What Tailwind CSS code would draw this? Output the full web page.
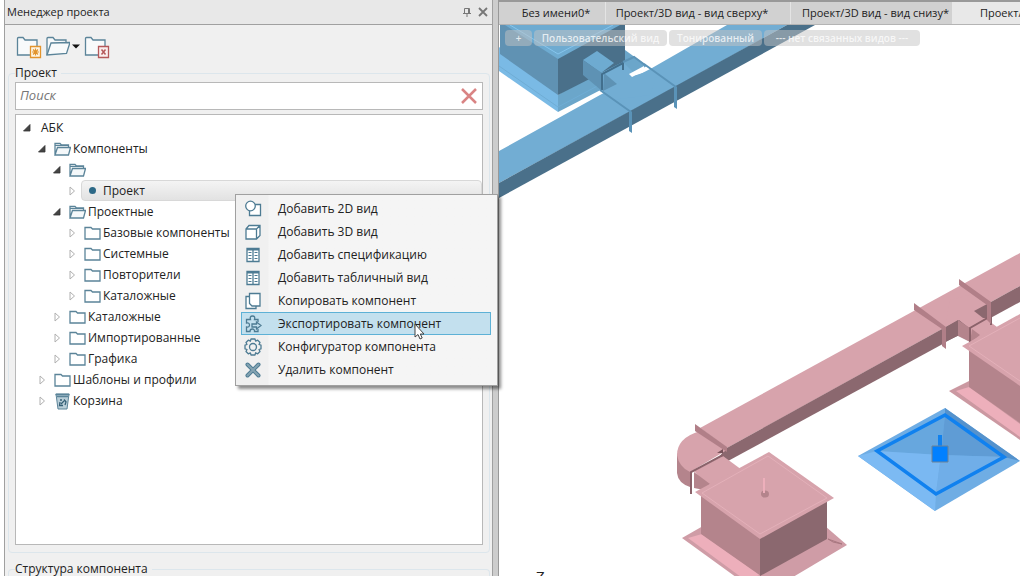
<!DOCTYPE html>
<html lang="ru">

<head>
  <meta charset="utf-8">
  <title>Менеджер проекта</title>
  <script src="https://cdn.jsdelivr.net/npm/@tailwindcss/browser@4"></script>
</head>

<body class="h-screen overflow-hidden bg-white px-1 font-['Open_Sans','Noto_Sans',sans-serif] text-xs text-[#222]">
  <!-- Icon sprite -->
  <svg class="hidden">
    <symbol id="folder" viewBox="0 0 17 14">
      <path d="M1 1.500h6l1.500 1.500H16v10H1z" fill="#fff" stroke="#5b8499" stroke-width="1.300" />
    </symbol>
    <symbol id="folder-open" viewBox="0 0 17 14">
      <path d="M1 13V1.500h5L7.500 3H14.500V5.500M1 13L3.500 5.500H16.500L14.500 13z" fill="#f4f8fa" stroke="#5b8499" stroke-width="1.300" />
      <path d="M1 3.500h13" stroke="#5b8499" />
    </symbol>
    <symbol id="collapsed" viewBox="0 0 12 12">
      <path d="M4 2l4.500 4L4 10z" fill="#fff" stroke="#b0b0b0" />
    </symbol>
    <symbol id="expanded" viewBox="0 0 12 12">
      <path d="M9 2.500V9H2.500z" fill="#444" stroke="#333" stroke-width=".8" />
    </symbol>
    <symbol id="table" viewBox="0 0 18 18">
      <path d="M3 2.500h12v13H3z" fill="#fff" stroke="#4d7b93" stroke-width="1.300" />
      <path d="M3 3.500h12" stroke="#4d7b93" stroke-width="2" />
      <path d="M9 3v12" stroke="#4d7b93" stroke-width="1.300" />
      <path d="M4.500 6.500h3M4.500 9.500h3M4.500 12.500h3M10.500 6.500h3M10.500 9.500h3M10.500 12.500h3" stroke="#4d7b93" stroke-width="1.200" />
    </symbol>
  </svg>

  <div class="flex h-full">
    <!-- Project manager panel -->
    <aside class="flex w-[489px] shrink-0 flex-col border-x border-[#a0a0a0] bg-[#f0f0f0]">
      <header class="flex h-[25px] shrink-0 items-center border-b border-[#a0a0a0] bg-[#e8e8e8] pr-[3px] pl-0.5">
        <h1 class="flex-1 text-[11px]">Менеджер проекта</h1>
        <button aria-label="Закрепить" class="mr-1">
          <svg class="size-3" viewBox="0 0 12 12" fill="none" stroke="#777">
            <path d="M3.500 7V2.500h5V7M7.500 3v4M2 7.500h8M6 8v3" />
          </svg>
        </button>
        <button aria-label="Закрыть">
          <svg class="size-3" viewBox="0 0 12 12" stroke="#777" stroke-width="1.800">
            <path d="M2 2l8 8M10 2l-8 8" />
          </svg>
        </button>
      </header>

      <div class="flex h-10 shrink-0 items-center gap-1 pt-1 pl-[11px]">
        <button aria-label="Создать">
          <svg class="h-6 w-[26px]" viewBox="0 0 26 24" fill="none">
            <path d="M1.500 20V3.500q0-1 1-1h4.500l2 2.500h12V20z" fill="#f8fafb" stroke="#5b8499" stroke-width="1.300" />
            <path d="M14.500 11.500h10v11h-10z" fill="#fdf6e8" stroke="#e2942d" stroke-width="1.300" />
            <path d="M19.500 13.500v7M16 17h7M17 14.500l5 5M22 14.500l-5 5" stroke="#e2942d" stroke-width="1.200" />
          </svg>
        </button>
        <button aria-label="Открыть" class="flex items-center">
          <svg class="h-6 w-6" viewBox="0 0 24 24">
            <path d="M1 20V3.500q0-1 1-1h5l2 2.500h11v3" fill="#f8fafb" stroke="#5b8499" stroke-width="1.300" />
            <path d="M1 20L5 8l19-.500L20.500 18.500z" fill="#f8fafb" stroke="#5b8499" stroke-width="1.300" />
          </svg>
          <svg class="ml-0.5 h-2 w-2" viewBox="0 0 8 8">
            <path d="M0 1.500h8L4 5.500z" fill="#111" />
          </svg>
        </button>
        <button aria-label="Закрыть проект">
          <svg class="h-6 w-[26px]" viewBox="0 0 26 24" fill="none">
            <path d="M1.500 20V3.500q0-1 1-1h4.500l2 2.500h12V20z" fill="#f8fafb" stroke="#5b8499" stroke-width="1.300" />
            <path d="M14.500 11.500h10v11h-10z" fill="#faeeee" stroke="#b5585a" stroke-width="1.300" />
            <path d="M17.500 14.500l4 5M21.500 14.500l-4 5" stroke="#b5585a" stroke-width="1.500" />
          </svg>
        </button>
      </div>

      <fieldset class="mr-0.5 ml-[3px] flex min-h-0 min-w-0 flex-1 flex-col rounded border border-[#dce6ec] px-1.5 pt-px pb-[7px]">
        <legend class="pr-1 leading-4">Проект</legend>
        <div class="mb-1 flex h-7 shrink-0 items-center border border-[#b8b8b8] bg-white px-1">
          <input type="text" aria-label="Поиск" placeholder="Поиск" class="min-w-0 flex-1 text-[13px] italic outline-none placeholder:text-[#777]">
          <button aria-label="Очистить">
            <svg class="size-[18px]" viewBox="0 0 18 18" stroke="#d98484" stroke-width="2.500">
              <path d="M2 2l14 14M16 2L2 16" />
            </svg>
          </button>
        </div>

        <!-- Component tree -->
        <ul role="tree" class="min-h-0 flex-1 overflow-hidden border border-[#b8b8b8] bg-white py-0.5 pl-[5px] leading-[21px]">
          <li role="treeitem" class="flex h-[21px] items-center">
            <button aria-label="Свернуть"><svg class="size-3"><use href="#expanded" /></svg></button>
            <span class="ml-2">АБК</span>
          </li>
          <li role="treeitem" class="flex h-[21px] items-center pl-[15px]">
            <button aria-label="Свернуть"><svg class="size-3"><use href="#expanded" /></svg></button>
            <svg class="mr-0.5 ml-1.5 h-3.5 w-[17px]"><use href="#folder-open" /></svg>
            <span>Компоненты</span>
          </li>
          <li role="treeitem" class="flex h-[21px] items-center pl-[30px]">
            <button aria-label="Свернуть"><svg class="size-3"><use href="#expanded" /></svg></button>
            <svg class="mr-0.5 ml-1.5 h-3.5 w-[17px]"><use href="#folder-open" /></svg>
          </li>
          <li role="treeitem" aria-selected="true" class="flex h-[21px] items-center pl-[45px]">
            <button aria-label="Развернуть"><svg class="size-3"><use href="#collapsed" /></svg></button>
            <span class="ml-[3px] flex h-[21px] flex-1 items-center rounded-sm border border-[#d8d8d8] bg-linear-to-b from-[#f4f4f4] to-[#e2e2e2] pl-[7px]">
              <span class="mr-[7px] size-[7px] rounded-full bg-[#2d6987]"></span>
              <span>Проект</span>
            </span>
          </li>
          <li role="treeitem" class="flex h-[21px] items-center pl-[30px]">
            <button aria-label="Свернуть"><svg class="size-3"><use href="#expanded" /></svg></button>
            <svg class="mr-0.5 ml-1.5 h-3.5 w-[17px]"><use href="#folder-open" /></svg>
            <span>Проектные</span>
          </li>
          <li role="treeitem" class="flex h-[21px] items-center pl-[45px]">
            <button aria-label="Развернуть"><svg class="size-3"><use href="#collapsed" /></svg></button>
            <svg class="mr-0.5 ml-1.5 h-3.5 w-[17px]"><use href="#folder" /></svg>
            <span>Базовые компоненты</span>
          </li>
          <li role="treeitem" class="flex h-[21px] items-center pl-[45px]">
            <button aria-label="Развернуть"><svg class="size-3"><use href="#collapsed" /></svg></button>
            <svg class="mr-0.5 ml-1.5 h-3.5 w-[17px]"><use href="#folder" /></svg>
            <span>Системные</span>
          </li>
          <li role="treeitem" class="flex h-[21px] items-center pl-[45px]">
            <button aria-label="Развернуть"><svg class="size-3"><use href="#collapsed" /></svg></button>
            <svg class="mr-0.5 ml-1.5 h-3.5 w-[17px]"><use href="#folder" /></svg>
            <span>Повторители</span>
          </li>
          <li role="treeitem" class="flex h-[21px] items-center pl-[45px]">
            <button aria-label="Развернуть"><svg class="size-3"><use href="#collapsed" /></svg></button>
            <svg class="mr-0.5 ml-1.5 h-3.5 w-[17px]"><use href="#folder" /></svg>
            <span>Каталожные</span>
          </li>
          <li role="treeitem" class="flex h-[21px] items-center pl-[30px]">
            <button aria-label="Развернуть"><svg class="size-3"><use href="#collapsed" /></svg></button>
            <svg class="mr-0.5 ml-1.5 h-3.5 w-[17px]"><use href="#folder" /></svg>
            <span>Каталожные</span>
          </li>
          <li role="treeitem" class="flex h-[21px] items-center pl-[30px]">
            <button aria-label="Развернуть"><svg class="size-3"><use href="#collapsed" /></svg></button>
            <svg class="mr-0.5 ml-1.5 h-3.5 w-[17px]"><use href="#folder" /></svg>
            <span>Импортированные</span>
          </li>
          <li role="treeitem" class="flex h-[21px] items-center pl-[30px]">
            <button aria-label="Развернуть"><svg class="size-3"><use href="#collapsed" /></svg></button>
            <svg class="mr-0.5 ml-1.5 h-3.5 w-[17px]"><use href="#folder" /></svg>
            <span>Графика</span>
          </li>
          <li role="treeitem" class="flex h-[21px] items-center pl-[15px]">
            <button aria-label="Развернуть"><svg class="size-3"><use href="#collapsed" /></svg></button>
            <svg class="mr-0.5 ml-1.5 h-3.5 w-[17px]"><use href="#folder" /></svg>
            <span>Шаблоны и профили</span>
          </li>
          <li role="treeitem" class="flex h-[21px] items-center pl-[15px]">
            <button aria-label="Развернуть"><svg class="size-3"><use href="#collapsed" /></svg></button>
            <svg class="mr-0.5 ml-1.5 h-[18px] w-[17px]" viewBox="0 0 17 18">
              <path d="M2 2h13l-2 15H4z" fill="#b9ced8" stroke="#5b8499" />
              <path d="M1.500 2.500h14M3 4.500h11" stroke="#5b8499" stroke-width="1.500" />
              <path d="M6 8h2M10 7.500l2 2.500-1 3M9 13.500H5.500l.500-3.500M7 12l3-3" fill="none" stroke="#345f76" stroke-width="1.300" />
            </svg>
            <span>Корзина</span>
          </li>
        </ul>
      </fieldset>

      <fieldset class="mt-2 mr-0.5 ml-[3px] h-[15px] min-w-0 shrink-0 rounded-t border border-b-0 border-[#dce6ec] px-1.5">
        <legend class="pr-1 leading-4">Структура компонента</legend>
      </fieldset>
    </aside>

    <div class="w-1.5 shrink-0 border-r border-[#999] bg-[#cdcdcd]"></div>

    <!-- Document area -->
    <main class="flex min-w-0 flex-1 flex-col">
      <nav class="flex h-[25px] shrink-0 overflow-hidden border-t-2 border-b border-t-[#999] border-b-[#b4b4b4] bg-[#e8e8e8] text-[11px] whitespace-nowrap">
        <button class="w-[107px] shrink-0 border-r border-[#e4e4e4] bg-[#d1d1d1] pl-2">Без имени0*</button>
        <button class="w-[185px] shrink-0 border-r border-[#e4e4e4] bg-[#d1d1d1] pr-3">Проект/3D вид - вид сверху*</button>
        <button class="w-[161px] shrink-0 bg-[#d1d1d1] pl-2">Проект/3D вид - вид снизу*</button>
        <button class="shrink-0 bg-[#e8e8e8] pl-7">Проект/3D вид</button>
      </nav>

      <div class="relative min-h-0 flex-1 overflow-hidden bg-white">
        <svg class="absolute inset-0 size-full" viewBox="499 25 521 551" preserveAspectRatio="xMinYMin slice">
          <!-- Blue unit -->
          <path d="M499 47L558 92V112L499 71z" fill="#7abae5" />
          <path d="M558 95L625 50L647 66L558 112z" fill="#6ba6ca" />
          <path d="M499 66L558 107L603 83" fill="none" stroke="#6fadd5" stroke-width="1" />
          <path d="M500 25H520L558 57V95L500 54z" fill="#6092b3" />
          <path d="M558 57L610 25H625V61L558 95z" fill="#4a708a" />
          <path d="M505 25H620L558 59z" fill="#6eabd1" />
          <path d="M510 25L558 54L613 25" fill="none" stroke="#86c5ed" />
          <!-- Blue duct -->
          <path d="M499 151L600 95L652 68L727 25H787L677 86L499 183z" fill="#72add3" />
          <path d="M499 183L787 25H815L680 99L499 198z" fill="#4a708a" />
          <path d="M583 60L597 51L614 63L601 73z" fill="#6eabd1" />
          <path d="M583 60L602 73V91L583 75z" fill="#5e92b4" />
          <path d="M601 73L623 62L636 75L660 68L650 95L612 100L601 91z" fill="#72add3" />
          <path d="M604 73L617 84L603 91z" fill="#5e92b4" />
          <path d="M602 90V74L623 63V70" fill="none" stroke="#426f8d" stroke-width="2" />
          <path d="M623 62L634 57L645 65" fill="none" stroke="#5b93b7" stroke-width="2" />
          <path d="M629 74L644 66V71L632 77z" fill="#fff" />
          <path d="M600 90L631 112M644 64L676 87" fill="none" stroke="#5a93b8" stroke-width="2" />
          <path d="M629 110L632 112V133L629 131zM674 85L677 87V109L674 107z" fill="#5a93b8" />

          <!-- Pink duct -->
          <path d="M700 428L1020 253V286L727 448z" fill="#d7a3ac" />
          <path d="M725 449L1020 286V302L728 461L720 456z" fill="#8b686f" />
          <path d="M677 453V473Q678 483 690 487V471z" fill="#b4848c" />
          <path d="M700 431Q677 438 677 455Q679 467 690 472L727 450z" fill="#d7a3ac" />
          <path d="M694 471L723 456L742 470L708 487z" fill="#d7a3ac" />
          <path d="M694 472L710 484L704 490L694 488z" fill="#b4848c" />
          <path d="M695 424L727 447V452L695 431z" fill="#b17f88" />
          <path d="M717 453L723 449V453z" fill="#765159" />
          <path d="M691 494V472L723 455" fill="none" stroke="#8b626a" stroke-width="2" />

          <!-- Pink junction -->
          <path d="M945 327L959 320L969 328L991 316L988 290L950 300z" fill="#d7a3ac" />
          <path d="M946 341V327L958 320V336z" fill="#8b686f" />
          <path d="M946 342L958 336L969 342L975 350H940z" fill="#fff" />
          <path d="M958 320L970 328V342L958 336z" fill="#b4848c" />
          <path d="M974 311L989 303V318L983 318z" fill="#8b686f" />
          <path d="M970 328L985 318L997 327L991 333L970 345z" fill="#d7a3ac" />
          <path d="M972 329L980 335L970 343z" fill="#b4848c" />
          <path d="M970 342V328L991 316V325" fill="none" stroke="#8b626a" stroke-width="2" />
          <path d="M914 303L946 327V349L942 346V329L914 310z" fill="#b17f88" />
          <path d="M959 279L991 302V324L987 320V305L959 285z" fill="#b17f88" />

          <!-- Pink unit on the right -->
          <path d="M949 391L969 381L1020 420V440z" fill="#cb98a1" />
          <path d="M956 391L969 387L1020 424V437z" fill="#edafbb" />
          <path d="M969 346H1020V423L969 387z" fill="#b4848c" />
          <path d="M962 346L1020 314V386z" fill="#d7a3ac" />
          <path d="M1020 318L969 346L1020 381" fill="none" stroke="#e3b0b9" />

          <!-- Pink unit below -->
          <path d="M682 538L703 526H825L847 545L788 580H740z" fill="#cf9ca6" />
          <path d="M688 538L702 534L760 575L745 580z" fill="#edafbb" />
          <path d="M701 494L761 536V576L701 534z" fill="#b4848c" />
          <path d="M760 536L827 499V539L760 576z" fill="#8b686f" />
          <path d="M828 539L842 544L833 542z" stroke="#a87780" fill="none" />
          <path d="M695 492L769 452L834 498L760 539z" fill="#d7a3ac" />
          <path d="M702 493L768 456L827 498L760 534z" fill="none" stroke="#e3b0b9" />
          <ellipse cx="765" cy="494" rx="4" ry="3.500" fill="#b4848c" />
          <path d="M764 478V493" stroke="#edafbb" stroke-width="2" />

          <!-- Selected hood -->
          <path d="M858 456L945 408L1020 461L935 511z" fill="#6fade4" />
          <path d="M858 456L877 451L936 494L935 511z" fill="#7cbaf3" />
          <path d="M945 408L1020 461L1004 457L945 415z" fill="#5592cc" />
          <path d="M877 451L945 415L941 455z" fill="#67a7de" />
          <path d="M945 415L1004 457L941 455z" fill="#5f9cd5" />
          <path d="M877 451L941 455L936 494z" fill="#7ab8f2" />
          <path d="M941 455L1004 457L936 494z" fill="#70aee8" />
          <path d="M877 451L945 415L1004 457L936 494z" fill="none" stroke="#1081ef" stroke-width="3.500" />
          <path d="M940 435V446" stroke="#1081ef" stroke-width="4" />
          <path d="M932 446h16v16h-16z" fill="#0080ff" stroke="#6c8296" />

          <text x="536" y="582" font-size="15" fill="#222">Z</text>
        </svg>

        <!-- View options -->
        <div class="relative flex gap-0.5 pt-[5px] pl-1.5 text-[10px] leading-4 font-semibold whitespace-nowrap text-white/75">
          <button class="w-[27px] rounded-sm bg-[#c4c4c4]/50">+</button>
          <button class="w-[133px] rounded-sm bg-[#c4c4c4]/50">Пользовательский вид</button>
          <button class="w-[93px] rounded-sm bg-[#c4c4c4]/50">Тонированный</button>
          <button class="w-[156px] rounded-sm bg-[#c4c4c4]/50">--- нет связанных видов ---</button>
        </div>
      </div>
    </main>
  </div>

  <!-- Context menu -->
  <div role="menu" class="absolute top-[194px] left-[235px] flex w-[263px] flex-col border border-[#a0a0a0] bg-linear-to-r from-[#f0f0f0] from-[32px] to-[#f5f5f5] to-[33px] pt-0.5 pr-1.5 pb-1 pl-[5px] shadow-[3px_3px_3px_rgba(0,0,0,0.45)]">
    <button role="menuitem" class="flex h-[23px] items-center gap-4 border border-transparent pl-0.5">
      <svg class="size-[18px]" viewBox="0 0 18 18" fill="none" stroke="#4d7b93" stroke-width="1.300">
        <path d="M11 4.500h5.500v11H5.500V11" fill="#fff" />
        <circle cx="6.500" cy="6" r="4.800" fill="#fff" />
      </svg>
      Добавить 2D вид
    </button>
    <button role="menuitem" class="flex h-[23px] items-center gap-4 border border-transparent pl-0.5">
      <svg class="size-[18px]" viewBox="0 0 18 18" fill="#fff" stroke="#4d7b93" stroke-width="1.300">
        <path d="M2 6L5 2.500h11v10L12.500 16H2zM2 6h10.500v10M12.500 6L16 2.500" />
      </svg>
      Добавить 3D вид
    </button>
    <button role="menuitem" class="flex h-[23px] items-center gap-4 border border-transparent pl-0.5">
      <svg class="size-[18px]"><use href="#table" /></svg>
      Добавить спецификацию
    </button>
    <button role="menuitem" class="flex h-[23px] items-center gap-4 border border-transparent pl-0.5">
      <svg class="size-[18px]"><use href="#table" /></svg>
      Добавить табличный вид
    </button>
    <button role="menuitem" class="flex h-[23px] items-center gap-4 border border-transparent pl-0.5">
      <svg class="size-[18px]" viewBox="0 0 18 18" fill="#fff" stroke="#4d7b93" stroke-width="1.300">
        <path d="M5 4.500H2v12h10V14" />
        <path d="M5.500 1.500H16V14H8L5.500 11.500z" />
      </svg>
      Копировать компонент
    </button>
    <button role="menuitem" class="flex h-[23px] items-center gap-4 border border-[#5db1d6] bg-[#c3e0ee] pl-0.5">
      <svg class="size-[18px]" viewBox="0 0 18 18" fill="none" stroke="#4d7b93" stroke-width="1.300">
        <path d="M14 7V4.500h-3.500Q11.500 1 8.500 1T6.500 4.500H2.500V8Q5.500 7.500 5.500 10T2.500 12v4.500H6Q6 14 8.300 14t2.200 2.500H14V14" />
        <path d="M8 9h4.500V7L17 10.500 12.500 14v-2H8z" />
      </svg>
      Экспортировать компонент
    </button>
    <button role="menuitem" class="flex h-[23px] items-center gap-4 border border-transparent pl-0.5">
      <svg class="size-[18px]" viewBox="0 0 18 18" fill="none" stroke="#4d7b93" stroke-width="1.300">
        <path d="M7 1h4l.600 2.200L13.700 2.200 16 4.500 15 6.500 17 7.200v3.600L15 11.500l1 2-2.300 2.300-2.100-1L11 17H7l-.600-2.200-2.100 1L2 13.500l1-2-2-.700V7.200L3 6.500 2 4.500 4.300 2.200l2.100 1z" stroke-linejoin="round" />
        <circle cx="9" cy="9" r="3.500" />
      </svg>
      Конфигуратор компонента
    </button>
    <button role="menuitem" class="flex h-[23px] items-center gap-4 border border-transparent pl-0.5">
      <svg class="size-[18px]" viewBox="0 0 18 18" stroke-linecap="round">
        <path d="M3.500 3.500l11 11M14.500 3.500l-11 11" stroke="#4d7b93" stroke-width="4" />
        <path d="M3.500 3.500l11 11M14.500 3.500l-11 11" stroke="#84a3b2" stroke-width="2" />
      </svg>
      Удалить компонент
    </button>
  </div>

  <!-- Mouse pointer -->
  <svg class="absolute top-[323px] left-[414px] h-[18px] w-3" viewBox="0 0 12 18">
    <path d="M1 1v13l3-2.500L6 16l2.200-1L6.300 11H10z" fill="#fff" stroke="#444" />
  </svg>
</body>

</html>
